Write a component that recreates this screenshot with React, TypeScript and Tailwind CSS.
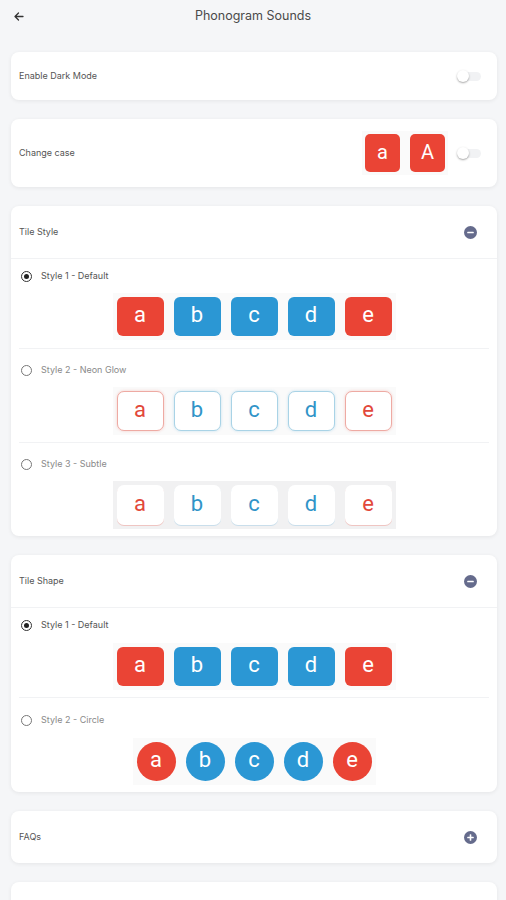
import React from 'react';

const letters = [
  { ch: 'a', red: true },
  { ch: 'b', red: false },
  { ch: 'c', red: false },
  { ch: 'd', red: false },
  { ch: 'e', red: true },
];

const tileFont = { fontFamily: 'Roboto, Inter, sans-serif' };

function Toggle() {
  return (
    <div className="relative w-[24px] h-[14px] flex items-center">
      <div className="w-[21px] h-[9px] ml-[3px] rounded-full bg-[#f1f2f4]" />
      <div className="absolute left-0 top-[1px] w-[12px] h-[12px] rounded-full bg-white shadow-[0_1px_2px_rgba(0,0,0,0.35)]" />
    </div>
  );
}

function RoundIcon({ plus }: { plus?: boolean }) {
  return (
    <svg width="13" height="13" viewBox="0 0 13 13">
      <circle cx="6.5" cy="6.5" r="6.5" fill="#656b8c" />
      <rect x="3.2" y="5.7" width="6.6" height="1.6" rx="0.6" fill="#fff" />
      {plus && <rect x="5.7" y="3.2" width="1.6" height="6.6" rx="0.6" fill="#fff" />}
    </svg>
  );
}

function Radio({ checked }: { checked?: boolean }) {
  return (
    <div
      className={
        'w-[11px] h-[11px] rounded-full border flex items-center justify-center ' +
        (checked ? 'border-[#333]' : 'border-[#777]')
      }
    >
      {checked && <div className="w-[5px] h-[5px] rounded-full bg-[#222]" />}
    </div>
  );
}

function Card({ children, className = '' }: { children: React.ReactNode; className?: string }) {
  return (
    <div className={'bg-white rounded-[8px] shadow-[0_1px_4px_rgba(0,0,0,0.07)] ' + className}>{children}</div>
  );
}

function OptionRow({
  label,
  checked,
  children,
  pt,
  pb,
  last,
}: {
  label: string;
  checked?: boolean;
  children: React.ReactNode;
  pt: string;
  pb: string;
  last?: boolean;
}) {
  return (
    <div className={(last ? '' : 'border-b border-[#f1f2f4] ') + 'mx-[8px] ' + pt + ' ' + pb}>
      <div className="flex items-center h-[14px] pl-[2px] gap-[9px]">
        <Radio checked={checked} />
        <span className={'text-[9px] ' + (checked ? 'text-[#555]' : 'text-[#8a8a8a]')}>{label}</span>
      </div>
      <div className="flex justify-center" style={tileFont}>
        {children}
      </div>
    </div>
  );
}

function DefaultTiles({ mt }: { mt: string }) {
  return (
    <div className={'flex gap-[10px] p-[4px] bg-[#fafafa] ' + mt}>
      {letters.map((l) => (
        <div
          key={l.ch}
          className={
            'w-[47px] h-[39px] rounded-[6px] flex items-center justify-center text-white text-[22px] leading-none pb-[3px] ' +
            (l.red ? 'bg-[#ea4435]' : 'bg-[#2b97d4]')
          }
        >
          {l.ch}
        </div>
      ))}
    </div>
  );
}

function NeonTiles() {
  return (
    <div className="flex gap-[10px] p-[4px] bg-[#fafafa] mt-[10px]">
      {letters.map((l) => (
        <div
          key={l.ch}
          className={
            'w-[47px] h-[40px] rounded-[7px] bg-white border flex items-center justify-center text-[22px] leading-none pb-[3px] ' +
            (l.red
              ? 'border-[#eeaaa3] text-[#e2483a] shadow-[0_0_3px_rgba(234,68,53,0.25)]'
              : 'border-[#a9d3e6] text-[#3194c8] shadow-[0_0_3px_rgba(43,151,212,0.25)]')
          }
        >
          {l.ch}
        </div>
      ))}
    </div>
  );
}

function SubtleTiles() {
  return (
    <div className="flex gap-[10px] p-[4px] bg-[#f1f1f2] mt-[10px]">
      {letters.map((l) => (
        <div
          key={l.ch}
          className={
            'w-[47px] h-[40px] rounded-[7px] bg-white flex items-center justify-center text-[22px] leading-none pb-[3px] ' +
            (l.red
              ? 'text-[#e2483a] shadow-[0_1px_0_rgba(234,68,53,0.25)]'
              : 'text-[#3194c8] shadow-[0_1px_0_rgba(43,151,212,0.2)]')
          }
        >
          {l.ch}
        </div>
      ))}
    </div>
  );
}

function CircleTiles() {
  return (
    <div className="flex gap-[10px] p-[4px] bg-[#fafafa] mt-[11px]">
      {letters.map((l) => (
        <div
          key={l.ch}
          className={
            'w-[39px] h-[39px] rounded-full flex items-center justify-center text-white text-[22px] leading-none pb-[3px] ' +
            (l.red ? 'bg-[#ea4435]' : 'bg-[#2b97d4]')
          }
        >
          {l.ch}
        </div>
      ))}
    </div>
  );
}

function SectionHeader({ title, plus }: { title: string; plus?: boolean }) {
  return (
    <div className="flex items-center justify-between h-[52px] pl-[8px] pr-[20px]">
      <span className="text-[9px] text-[#555]">{title}</span>
      <RoundIcon plus={plus} />
    </div>
  );
}

export default function App() {
  return (
    <div
      className="w-[506px] h-[900px] overflow-hidden bg-[#f5f6f8] text-[#444]"
      style={{ fontFamily: 'Inter, "Noto Sans", sans-serif' }}
    >
      <div className="relative h-[32px] flex items-center justify-center">
        <svg className="absolute left-[14px] top-[12px]" width="10" height="9" viewBox="0 0 10 9">
          <path d="M9 4.5H1.5M4.5 1L1 4.5L4.5 8" fill="none" stroke="#333" strokeWidth="1.3" strokeLinecap="round" strokeLinejoin="round" />
        </svg>
        <span className="text-[12.5px] text-[#4a4a4a]">Phonogram Sounds</span>
      </div>

      <div className="pl-[11px] pr-[9px] pt-[20px] flex flex-col gap-[19px]">
        <Card className="h-[48px] flex items-center justify-between pl-[8px] pr-[16px]">
          <span className="text-[9px] text-[#555]">Enable Dark Mode</span>
          <Toggle />
        </Card>

        <Card className="h-[68px] flex items-center justify-between pl-[8px] pr-[16px]">
          <span className="text-[9px] text-[#555]">Change case</span>
          <div className="flex items-center gap-[9px]">
            <div className="flex gap-[10px] p-[3px] bg-[#fafafa]">
              {['a', 'A'].map((c) => (
                <div
                  key={c}
                  className="w-[35px] h-[38px] rounded-[5px] bg-[#ea4435] text-white text-[20px] leading-none pb-[2px] flex items-center justify-center"
                  style={tileFont}
                >
                  {c}
                </div>
              ))}
            </div>
            <Toggle />
          </div>
        </Card>

        <Card className="h-[330px]">
          <div className="border-b border-[#f1f2f4]">
            <SectionHeader title="Tile Style" />
          </div>
          <OptionRow label="Style 1 - Default" checked pt="pt-[10px]" pb="pb-[8px]">
            <DefaultTiles mt="mt-[10px]" />
          </OptionRow>
          <OptionRow label="Style 2 - Neon Glow" pt="pt-[14px]" pb="pb-[7px]">
            <NeonTiles />
          </OptionRow>
          <OptionRow label="Style 3 - Subtle" pt="pt-[14px]" pb="pb-[9px]" last>
            <SubtleTiles />
          </OptionRow>
        </Card>

        <Card className="h-[237px]">
          <div className="border-b border-[#f1f2f4]">
            <SectionHeader title="Tile Shape" />
          </div>
          <OptionRow label="Style 1 - Default" checked pt="pt-[10px]" pb="pb-[7px]">
            <DefaultTiles mt="mt-[11px]" />
          </OptionRow>
          <OptionRow label="Style 2 - Circle" pt="pt-[15px]" pb="pb-[9px]" last>
            <CircleTiles />
          </OptionRow>
        </Card>

        <Card className="h-[52px]">
          <SectionHeader title="FAQs" plus />
        </Card>

        <Card className="h-[52px]">
          <div />
        </Card>
      </div>
    </div>
  );
}
